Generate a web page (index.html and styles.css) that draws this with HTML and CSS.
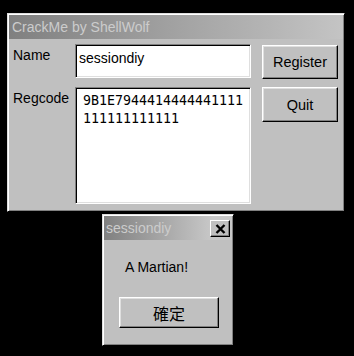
FILE: index.html
```html
<!DOCTYPE html>
<html lang="en">
<head>
    <meta charset="UTF-8">
    <title>CrackMe by ShellWolf</title>
    <link rel="stylesheet" href="styles.css">
</head>
<body>
    <div class="window main">
        <div class="titlebar">CrackMe by ShellWolf</div>
        <div class="content">
            <div class="fields">
                <label class="label">Name</label>
                <div class="edit name-edit">sessiondiy</div>
                <label class="label">Regcode</label>
                <div class="edit code-edit">9B1E7944414444441111<br>111111111111</div>
            </div>
            <div class="buttons">
                <button class="btn register">Register</button>
                <button class="btn quit">Quit</button>
            </div>
        </div>
    </div>

    <div class="window dialog">
        <div class="titlebar dlg-title">
            <span>sessiondiy</span>
            <span class="close">
                <svg width="11" height="10" viewBox="0 0 11 10">
                    <path d="M1.5 1 L9.5 9 M9.5 1 L1.5 9" stroke="#000" stroke-width="2.4"/>
                </svg>
            </span>
        </div>
        <div class="dlg-body">
            <p class="message">A Martian!</p>
            <button class="btn ok">確定</button>
        </div>
    </div>
</body>
</html>
```

FILE: styles.css
```css
body {
    margin: 0;
    background-color: #000;
    font-family: "Liberation Sans", Arial, sans-serif;
    font-size: 14px;
    line-height: 16px;
    color: #000;
}
.window {
    box-sizing: border-box;
    background-color: #c0c0c0;
    border: 1px solid;
    border-color: #dfdfdf #000 #000 #dfdfdf;
    box-shadow: inset 1px 1px #fff, inset -1px -1px #808080;
    padding: 1px;
}
.main {
    width: 338px;
    height: 199px;
    margin: 13px 0 0 7px;
}
.titlebar {
    height: 24px;
    display: flex;
    align-items: center;
    padding-left: 3px;
    background: linear-gradient(to right, #808080, #c4c4c4);
    color: #cccccc;
    font-size: 14px;
}
.content {
    display: flex;
    padding: 5px 0 0 4px;
}
.fields {
    display: grid;
    grid-template-columns: 62px 176px;
    grid-template-rows: 34px 117px;
    row-gap: 9px;
}
.label {
    padding-top: 3px;
}
.edit {
    box-sizing: border-box;
    background-color: #fff;
    border: 1px solid;
    border-color: #808080 #fff #fff #808080;
    box-shadow: inset 1px 1px #000, inset -1px -1px #dfdfdf;
}
.name-edit {
    padding: 5px 0 0 3px;
}
.code-edit {
    padding: 4px 0 0 7px;
    font-family: "DejaVu Sans Mono", "Liberation Mono", monospace;
    font-size: 13.3px;
    line-height: 18px;
}
.buttons {
    display: flex;
    flex-direction: column;
    gap: 8px;
    margin-left: 11px;
    width: 76px;
}
.btn {
    box-sizing: border-box;
    background-color: #c0c0c0;
    border: 1px solid;
    border-color: #fff #000 #000 #fff;
    box-shadow: inset -1px -1px #808080, inset 1px 1px #dfdfdf;
    font-family: "Liberation Sans", Arial, sans-serif;
    font-size: 14.5px;
    color: #000;
    padding: 0;
}
.register {
    height: 34px;
    margin-top: 1px;
}
.quit {
    height: 35px;
}
.dialog {
    width: 132px;
    height: 132px;
    margin: 2px 0 0 102px;
}
.dlg-title {
    justify-content: space-between;
    background: linear-gradient(to right, #808080, #c8c8c8 85%);
    padding-left: 2px;
}
.close {
    box-sizing: border-box;
    width: 20px;
    height: 17px;
    margin: 1px 2px 0 0;
    display: flex;
    align-items: center;
    justify-content: center;
    background-color: #c0c0c0;
    border: 1px solid;
    border-color: #fff #000 #000 #fff;
    box-shadow: inset -1px -1px #808080;
}
.dlg-body {
    padding-left: 15px;
}
.message {
    margin: 19px 0 0 6px;
}
.ok {
    width: 100px;
    height: 31px;
    margin-top: 22px;
    font-family: "Noto Sans CJK TC", sans-serif;
    font-size: 16px;
}
```
